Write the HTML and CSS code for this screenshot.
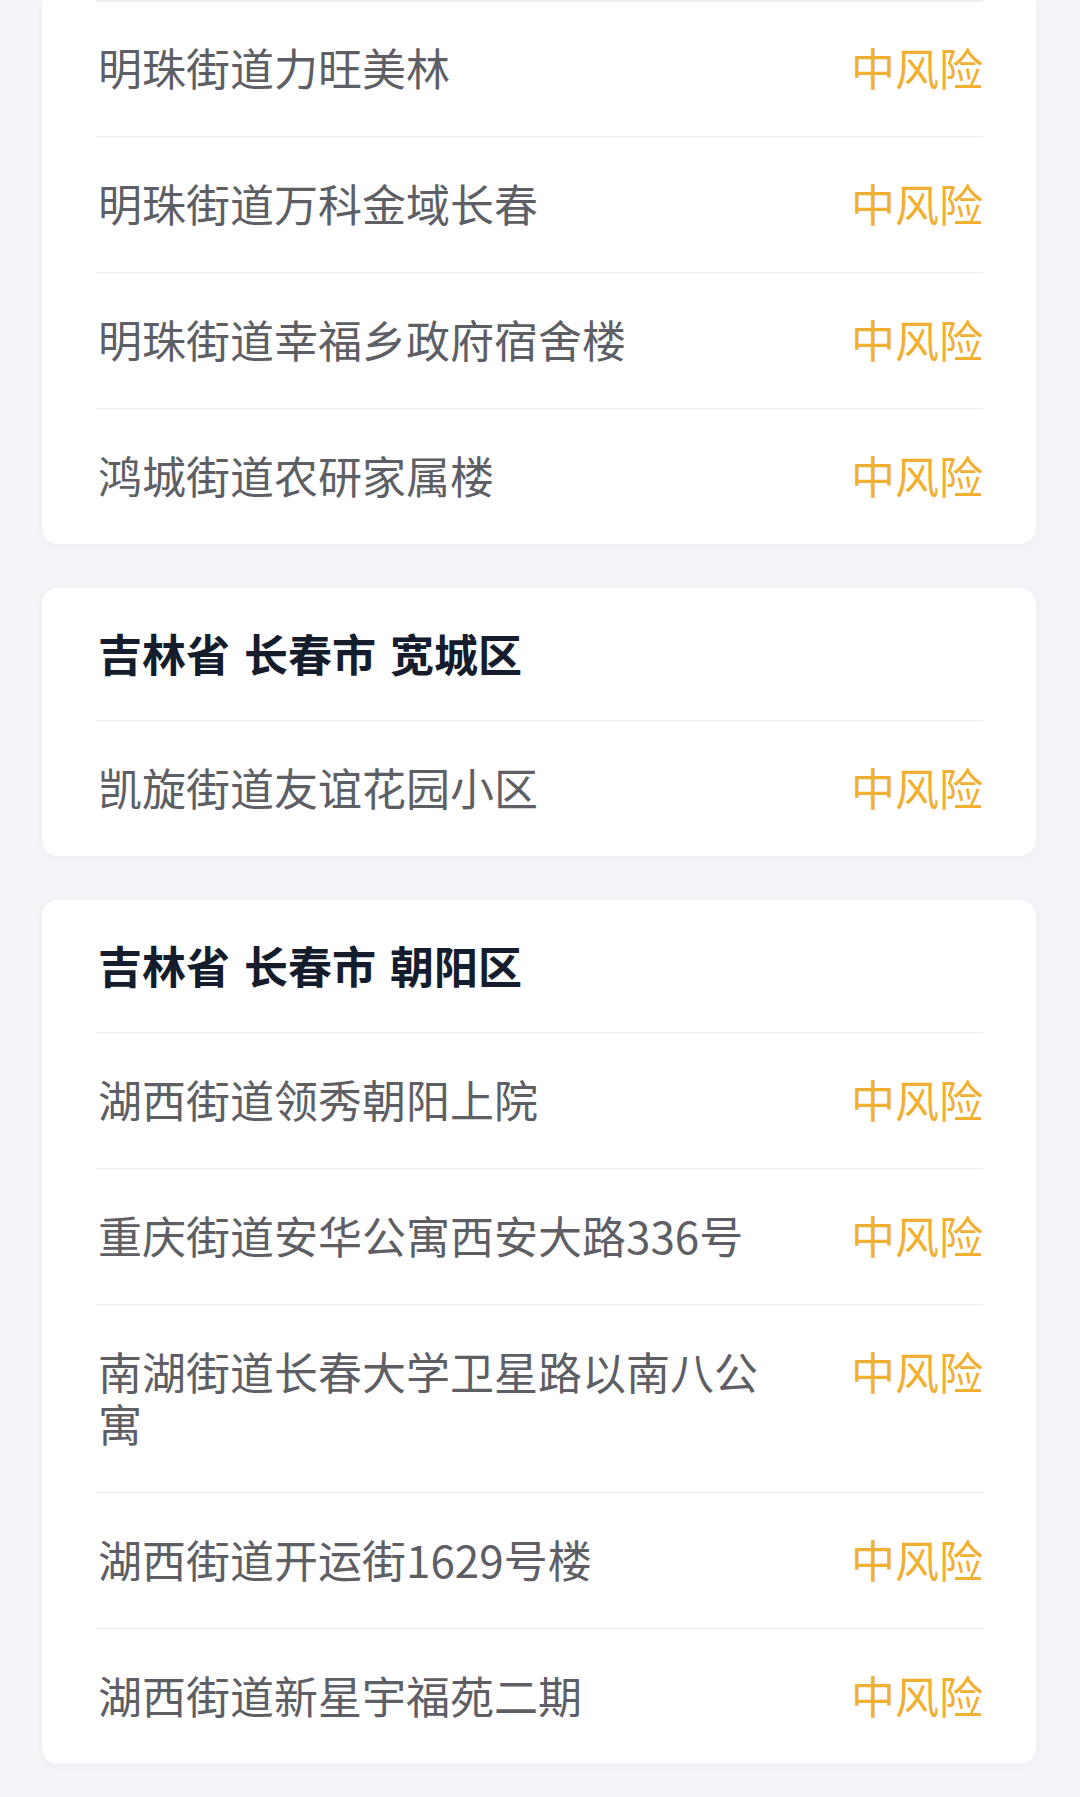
FILE: index.html
```html
<!DOCTYPE html>
<html lang="zh-CN">
<head>
<meta charset="utf-8">
<title>风险地区</title>
<link rel="stylesheet" href="styles.css">
</head>
<body>
<div class="page">
  <section class="card card-cut">
    <div class="row row-top"><span class="place">明珠街道力旺美林</span><span class="risk">中风险</span></div>
    <div class="row"><span class="place">明珠街道万科金域长春</span><span class="risk">中风险</span></div>
    <div class="row"><span class="place">明珠街道幸福乡政府宿舍楼</span><span class="risk">中风险</span></div>
    <div class="row"><span class="place">鸿城街道农研家属楼</span><span class="risk">中风险</span></div>
  </section>
  <section class="card">
    <h2 class="head">吉林省 长春市 宽城区</h2>
    <div class="row"><span class="place">凯旋街道友谊花园小区</span><span class="risk">中风险</span></div>
  </section>
  <section class="card">
    <h2 class="head">吉林省 长春市 朝阳区</h2>
    <div class="row"><span class="place">湖西街道领秀朝阳上院</span><span class="risk">中风险</span></div>
    <div class="row"><span class="place">重庆街道安华公寓西安大路336号</span><span class="risk">中风险</span></div>
    <div class="row"><span class="place">南湖街道长春大学卫星路以南八公寓</span><span class="risk">中风险</span></div>
    <div class="row"><span class="place">湖西街道开运街1629号楼</span><span class="risk">中风险</span></div>
    <div class="row"><span class="place">湖西街道新星宇福苑二期</span><span class="risk">中风险</span></div>
  </section>
</div>
</body>
</html>
```

FILE: styles.css
```css
html, body {
  margin: 0;
  padding: 0;
  background: #f2f4f7;
}
body {
  font-family: "Noto Sans CJK SC", "Noto Sans", sans-serif;
  font-size: 44px;
  line-height: 52px;
}
.page {
  display: flex;
  flex-direction: column;
  gap: 44px;
  padding: 0 44px 40px 42px;
}
.card {
  background: #ffffff;
  border-radius: 16px;
  padding: 0 53px 0 54px;
  box-shadow: 0 2px 8px rgba(30, 40, 60, 0.03);
}
.card-cut {
  border-top-left-radius: 0;
  border-top-right-radius: 0;
}
.head {
  margin: 0;
  padding: 39px 0 41px 2px;
  font-size: 44px;
  line-height: 52px;
  font-weight: 700;
  color: #151d2c;
  word-spacing: 4px;
}
.row {
  display: flex;
  align-items: flex-start;
  justify-content: space-between;
  padding: 40px 0 43px 0;
  border-top: 1px solid #ebebeb;
}
.card-cut .row-top {
  border-top: 2px solid #ededed;
  padding-top: 39px;
}
.place {
  flex: 1;
  max-width: 684px;
  padding-left: 2px;
  color: #5e5f65;
  font-weight: 400;
}
.risk {
  flex: none;
  color: #f0b032;
  font-weight: 400;
}
```
